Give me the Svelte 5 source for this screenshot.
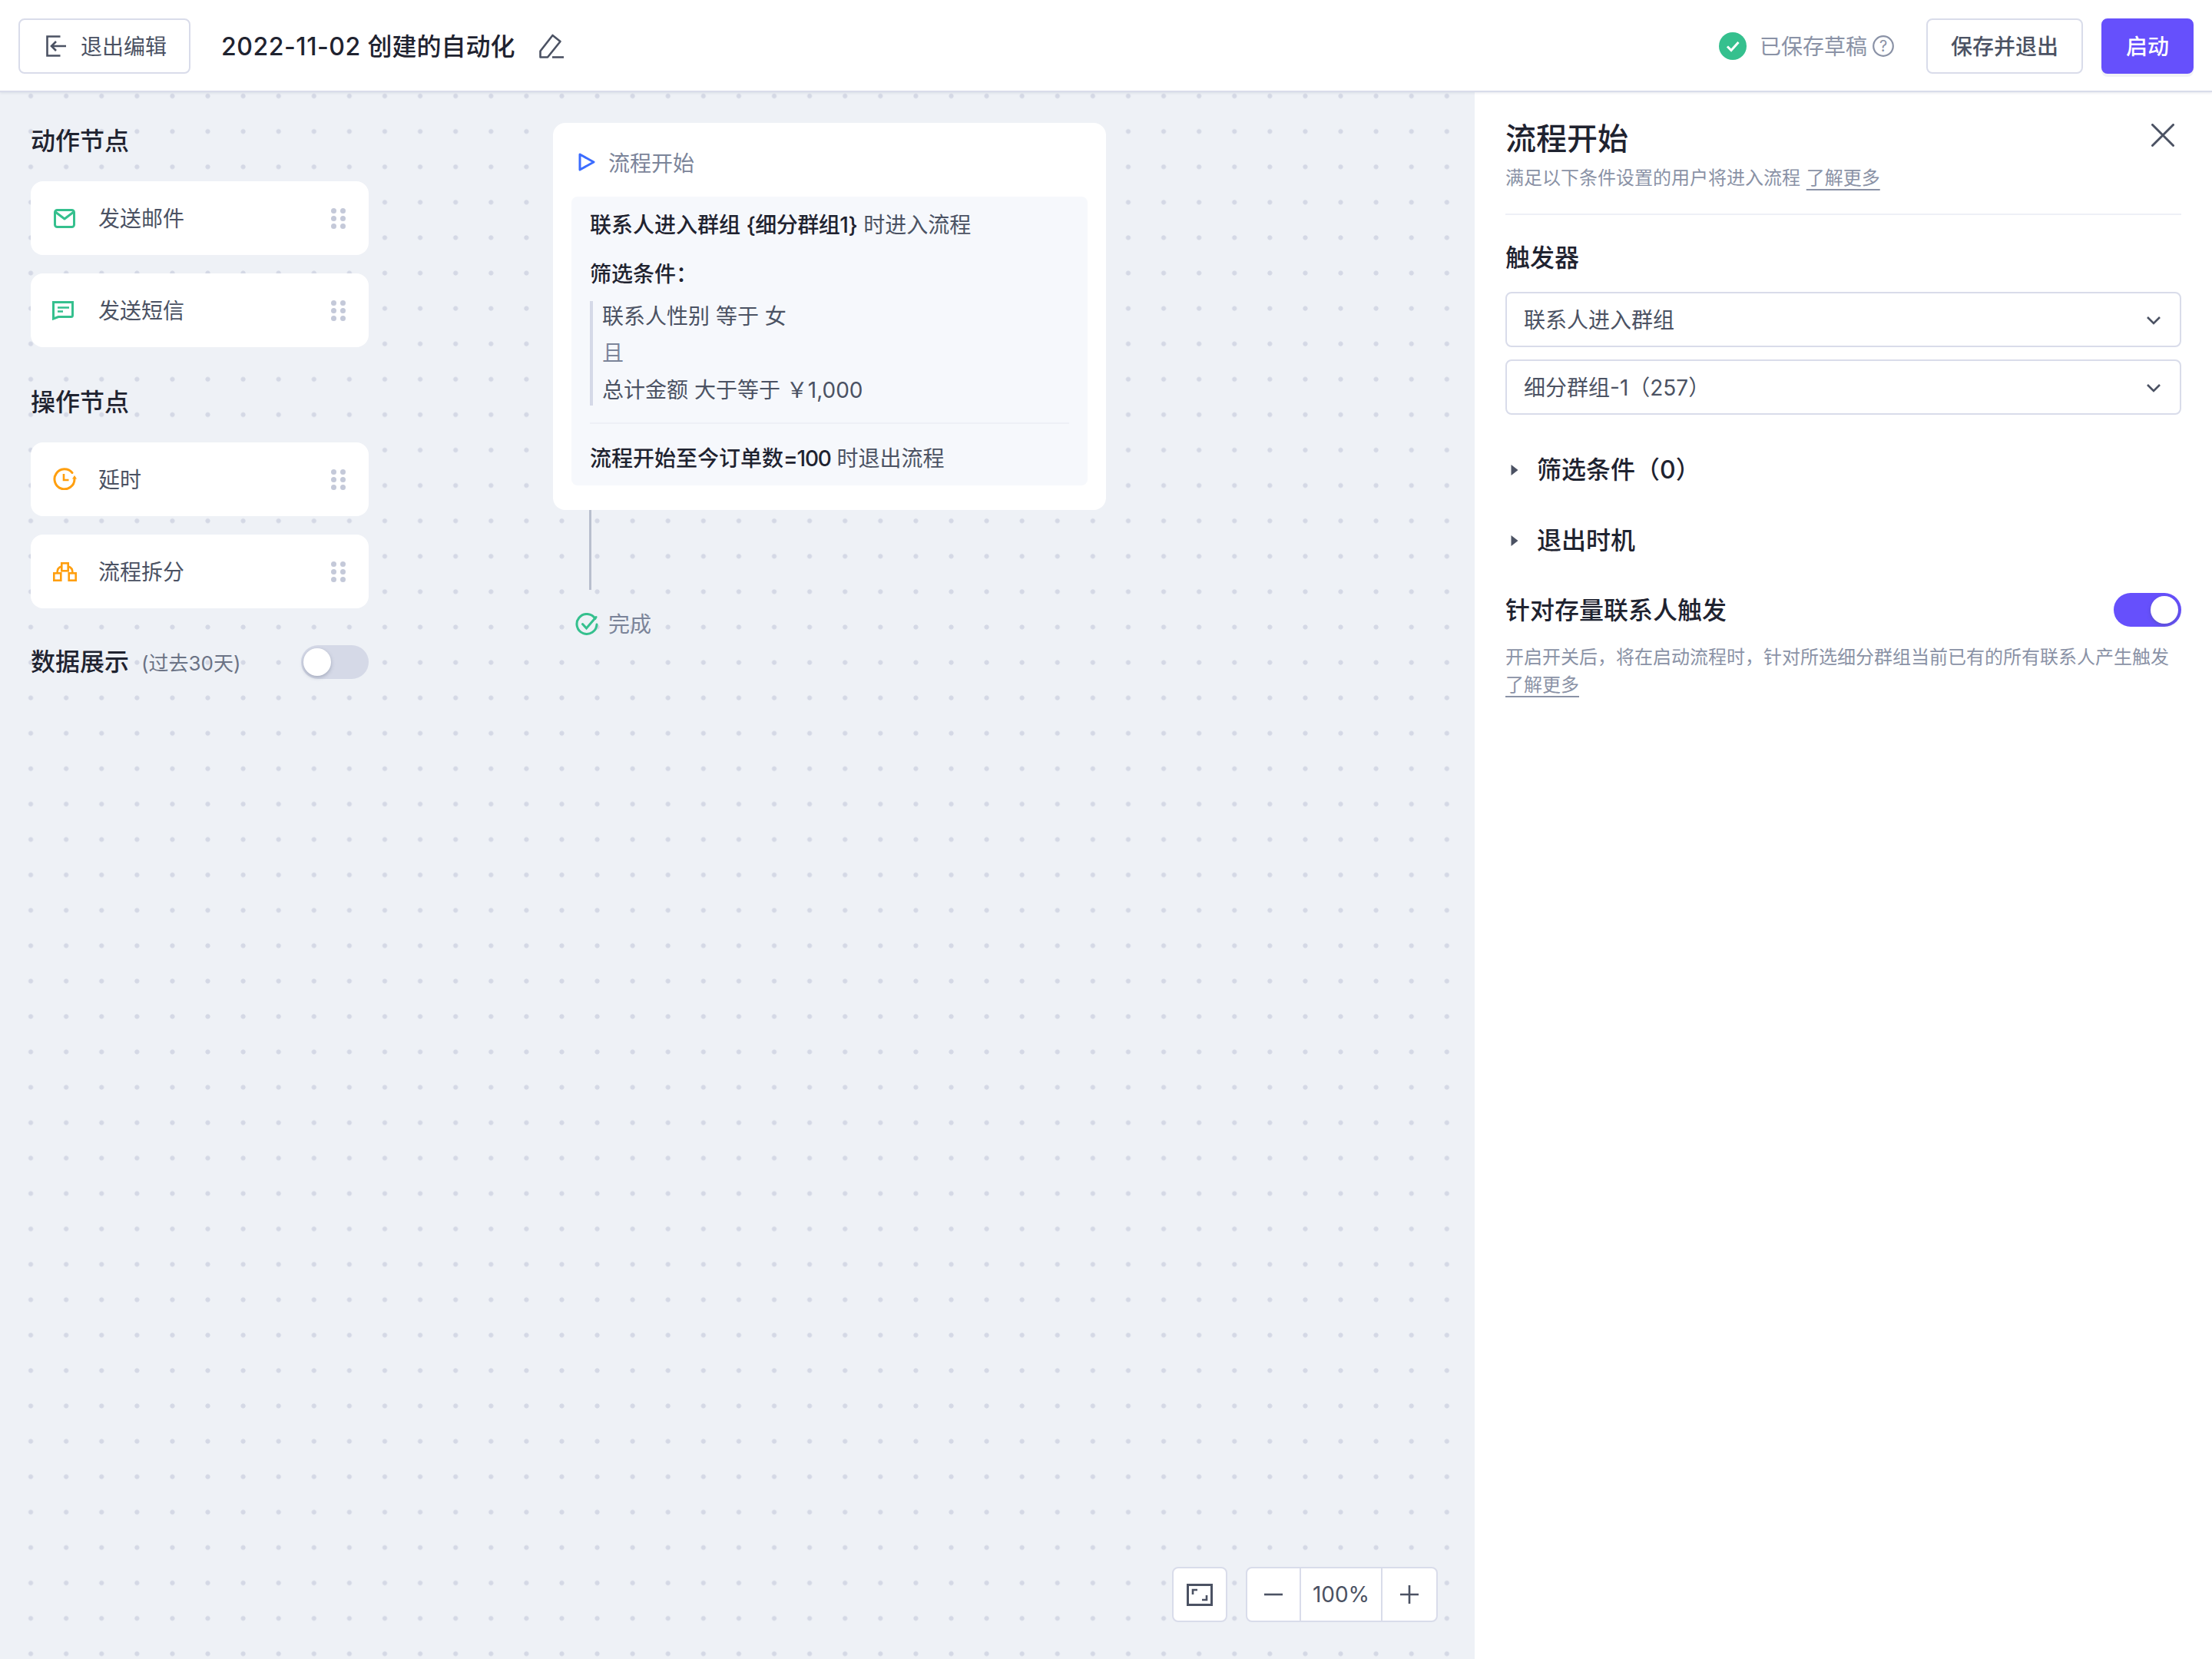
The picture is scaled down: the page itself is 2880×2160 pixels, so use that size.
<script>
  const actions = [
    { label: '发送邮件', icon: 'mail' },
    { label: '发送短信', icon: 'sms' }
  ];
  const operations = [
    { label: '延时', icon: 'delay' },
    { label: '流程拆分', icon: 'split' }
  ];
  const segmentName = '{细分群组1}';
  const conditions = ['联系人性别 等于 女', '且', '总计金额 大于等于 ￥1,000'];
</script>

{#snippet nodeIcon(name)}
  {#if name === 'mail'}
    <svg class="nico mail" viewBox="0 0 28 25" fill="none" stroke="#35c08e" stroke-width="3" stroke-linejoin="round">
      <rect x="1.5" y="1.5" width="25" height="22" rx="3" />
      <path d="M1.5 3.5 14 13 26.5 3.5" />
    </svg>
  {:else if name === 'sms'}
    <svg class="nico sms" viewBox="0 0 28 25" fill="none" stroke="#35c08e" stroke-width="3" stroke-linejoin="miter">
      <path d="M1.5 1.5H26.5V18.5a2 2 0 0 1-2 2H8L1.5 23Z" />
      <path d="M7 8.5H22M7 13.5H14" stroke-width="2.4" />
    </svg>
  {:else if name === 'delay'}
    <svg class="nico delay" viewBox="0 0 31 29" fill="none" stroke="#ff9f0f" stroke-width="3" stroke-linecap="round">
      <path d="M25 6.5A13 13 0 1 0 28 15" />
      <path d="M14 8v8h6.5" stroke-width="2.6" stroke-linecap="butt" />
      <path d="M25 14.5 28 10l3 4.5Z" fill="#ff9f0f" stroke="none" />
    </svg>
  {:else}
    <svg class="nico split" viewBox="0 0 31 25" fill="none" stroke="#ff9f0f" stroke-width="2.6">
      <rect x="11.3" y="1.3" width="8.4" height="10" />
      <rect x="1.3" y="14.3" width="9" height="9.4" />
      <rect x="20.7" y="14.3" width="9" height="9.4" />
      <path d="M11 5.5C7 6.5 5.5 10 5.5 14M20 5.5C24 6.5 25.5 10 25.5 14" />
    </svg>
  {/if}
{/snippet}

{#snippet grip()}
  <span class="grip"><i></i><i></i><i></i><i></i><i></i><i></i></span>
{/snippet}

{#snippet chevron()}
  <svg class="chev" viewBox="0 0 20 12" fill="none" stroke="#4b5263" stroke-width="2.6">
    <path d="M2 2 10 10 18 2" />
  </svg>
{/snippet}

{#snippet caret()}
  <svg class="caret" viewBox="0 0 10 14"><path d="M0.5 0 9.5 7 0.5 14Z" fill="#4b5263" /></svg>
{/snippet}

<div class="app">
  <header class="topbar">
    <div class="left">
      <button class="btn exit">
        <svg class="exit-ico" viewBox="0 0 27 28" fill="none" stroke="#4b5263" stroke-width="2.6">
          <path d="M18.5 1.5H1.5V26.5H18.5" />
          <path d="M26 14H7.5M13 8l-6 6 6 6" />
        </svg>
        退出编辑
      </button>
      <h1 class="title"><span class="date">2022-11-02</span> 创建的自动化</h1>
      <svg class="edit" viewBox="0 0 32 32" fill="none" stroke="#4b5263" stroke-width="2.6" stroke-linejoin="round">
        <path d="M1.5 30.5V22.5L17.5 2 27.5 10 11 30.5Z" />
        <path d="M17 30.5H32" />
      </svg>
    </div>
    <div class="right">
      <span class="saved-dot">
        <svg viewBox="0 0 36 36" fill="none" stroke="#fff" stroke-width="3"><path d="M11 18.5 16 23.5 25.5 13" /></svg>
      </span>
      <span class="saved">已保存草稿</span>
      <svg class="help" viewBox="0 0 28 28">
        <circle cx="14" cy="14" r="12.8" fill="none" stroke="#8a92a6" stroke-width="2.2" />
        <text x="14" y="20.5" text-anchor="middle">?</text>
      </svg>
      <button class="btn save">保存并退出</button>
      <button class="btn start">启动</button>
    </div>
  </header>

  <div class="body">
    <main class="canvas">
      <section class="palette">
        <h2 class="pal-title">动作节点</h2>
        {#each actions as item}
          <div class="pal-card">
            {@render nodeIcon(item.icon)}
            <span class="pal-label">{item.label}</span>
            {@render grip()}
          </div>
        {/each}
        <h2 class="pal-title second">操作节点</h2>
        {#each operations as item}
          <div class="pal-card">
            {@render nodeIcon(item.icon)}
            <span class="pal-label">{item.label}</span>
            {@render grip()}
          </div>
        {/each}
        <div class="data-row">
          <h2 class="pal-title flat">数据展示</h2>
          <span class="range">(过去30天)</span>
          <span class="toggle off"><i></i></span>
        </div>
      </section>

      <div class="flow">
        <article class="node">
          <div class="node-head">
            <svg class="play" viewBox="0 0 22 24" fill="none" stroke="#3b6cff" stroke-width="3" stroke-linejoin="round">
              <path d="M2 2 20 12 2 22Z" />
            </svg>
            流程开始
          </div>
          <div class="node-body">
            <p class="line"><b>联系人进入群组 <span class="tight">{segmentName}</span></b> 时进入流程</p>
            <p class="line filter"><b>筛选条件：</b></p>
            <div class="conds">
              {#each conditions as c, i}
                <p class="cond" class:and={i === 1}>{c}</p>
              {/each}
            </div>
            <div class="rule"></div>
            <p class="line"><b>流程开始至今订单数<span class="tighter">=100</span></b> 时退出流程</p>
          </div>
        </article>
        <div class="connector"></div>
        <div class="done">
          <svg viewBox="0 0 30 30" fill="none" stroke="#35c08e" stroke-width="3" stroke-linecap="round">
            <path d="M26 7.5A13 13 0 1 0 28 15" />
            <path d="M9.5 14.5 14.5 20 27 5.5" />
          </svg>
          完成
        </div>
      </div>

      <div class="zoombar">
        <button class="zbtn fit">
          <svg viewBox="0 0 34 29" fill="none" stroke="#4b5263" stroke-width="3">
            <rect x="1.5" y="1.5" width="31" height="26" />
            <path d="M14 8H8V14M20 21H26V15" stroke-width="2.6" />
          </svg>
        </button>
        <div class="zgroup">
          <button class="zseg">
            <svg viewBox="0 0 24 24" stroke="#4b5263" stroke-width="2.6"><path d="M0 12H24" /></svg>
          </button>
          <span class="zval">100%</span>
          <button class="zseg">
            <svg viewBox="0 0 24 24" stroke="#4b5263" stroke-width="2.6"><path d="M0 12H24M12 0V24" /></svg>
          </button>
        </div>
      </div>
    </main>

    <aside class="panel">
      <div class="panel-head">
        <div class="ph-row">
          <h2 class="ph-title">流程开始</h2>
          <svg class="close" viewBox="0 0 30 30" stroke="#4b5263" stroke-width="3" stroke-linecap="round"><path d="M1.5 1.5 28.5 28.5M28.5 1.5 1.5 28.5" /></svg>
        </div>
        <p class="ph-sub">满足以下条件设置的用户将进入流程 <a href="#more">了解更多</a></p>
      </div>

      <h3 class="sec trigger">触发器</h3>
      <div class="select">联系人进入群组{@render chevron()}</div>
      <div class="select">细分群组-1（257）{@render chevron()}</div>

      <div class="coll">{@render caret()}<h3 class="sec">筛选条件（0）</h3></div>
      <div class="coll">{@render caret()}<h3 class="sec">退出时机</h3></div>

      <div class="stock">
        <h3 class="sec">针对存量联系人触发</h3>
        <span class="toggle on"><i></i></span>
      </div>
      <p class="desc">开启开关后，将在启动流程时，针对所选细分群组当前已有的所有联系人产生触发<br /><a href="#more">了解更多</a></p>
    </aside>
  </div>
</div>

<style>
  :global(body) { margin: 0; }
  :global(*) { box-sizing: border-box; }
  .app {
    width: 2880px;
    height: 2160px;
    display: flex;
    flex-direction: column;
    font-family: Inter, "Noto Sans CJK SC", sans-serif;
    font-size: 28px;
    color: #4b5263;
    overflow: hidden;
  }
  h1, h2, h3, p { margin: 0; font-weight: 500; }
  b { font-weight: 500; color: #1f2330; }
  button { font: inherit; }

  .topbar {
    position: relative;
    z-index: 2;
    flex: none;
    height: 120px;
    background: #fff;
    border-bottom: 2px solid #d9dcea;
    box-shadow: 0 1px 3px rgba(150, 158, 185, 0.25);
    display: flex;
    align-items: center;
    justify-content: space-between;
    padding: 2px 24px 0;
  }
  .left, .right { display: flex; align-items: center; }
  .btn {
    height: 72px;
    border-radius: 8px;
    border: 2px solid #d9dcea;
    background: #fff;
    color: #4b5263;
    font-size: 28px;
    line-height: 1;
    display: flex;
    align-items: center;
    justify-content: center;
    padding: 2px 0 0;
  }
  .exit { width: 224px; gap: 18px; font-weight: 400; justify-content: flex-start; padding-left: 34px; }
  .exit-ico { width: 27px; height: 28px; margin-top: -2px; }
  .title { margin-left: 40px; padding-top: 2px; font-size: 32px; color: #1f2330; line-height: 44px; }
  .date { letter-spacing: 0.55px; }
  .edit { margin-left: 32px; width: 32px; height: 32px; }
  .saved-dot { width: 36px; height: 36px; border-radius: 50%; background: #35c08e; display: block; }
  .saved-dot svg { display: block; width: 36px; height: 36px; }
  .saved { margin-left: 17px; padding-top: 2px; color: #8a92a6; line-height: 40px; }
  .help { margin-left: 7px; width: 28px; height: 28px; }
  .help text { font-size: 20px; fill: #8a92a6; font-family: Inter, sans-serif; }
  .save { margin-left: 42px; width: 204px; font-weight: 500; }
  .start {
    margin-left: 24px;
    width: 120px;
    background: #6650fc;
    border-color: #6650fc;
    color: #fff;
    font-weight: 500;
    box-shadow: 0 4px 0 #f1f2f6;
  }

  .body { flex: 1; display: flex; min-height: 0; }
  .canvas {
    position: relative;
    width: 1920px;
    flex: none;
    background-color: #eef1f6;
    background-image: radial-gradient(circle, #d4d8e5 2.7px, rgba(212, 216, 229, 0) 3.4px);
    background-size: 46.1px 46.1px;
    background-position: 17px -18px;
    padding: 46px 0 0 40px;
  }

  .palette { width: 440px; }
  .pal-title { font-size: 32px; line-height: 36px; color: #1f2330; margin-bottom: 34px; }
  .pal-title.second { margin-top: 54px; margin-bottom: 34px; }
  .pal-title.flat { margin: 0; }
  .pal-card {
    position: relative;
    height: 96px;
    margin-bottom: 24px;
    background: #fff;
    border-radius: 16px;
    display: flex;
    align-items: center;
    padding-left: 88px;
  }
  .pal-label { line-height: 40px; padding-top: 2px; }
  .nico { position: absolute; display: block; }
  .mail { left: 30px; top: 36px; width: 28px; height: 25px; }
  .sms { left: 28px; top: 36px; width: 28px; height: 25px; }
  .delay { left: 29px; top: 33px; width: 31px; height: 29px; }
  .split { left: 29px; top: 36px; width: 31px; height: 25px; }
  .grip {
    position: absolute;
    left: 391px;
    top: 35px;
    display: grid;
    grid-template-columns: 7px 7px;
    grid-auto-rows: 7px;
    column-gap: 5px;
    row-gap: 3px;
  }
  .grip i { display: block; border-radius: 50%; background: #c4c9d9; }

  .data-row { display: flex; align-items: center; height: 44px; margin-top: 48px; position: relative; }
  .range { margin-left: 16px; padding-bottom: 2px; font-size: 26px; color: #6b7385; }
  .toggle {
    display: block;
    width: 88px;
    height: 44px;
    border-radius: 22px;
    position: relative;
    flex: none;
  }
  .toggle i {
    position: absolute;
    top: 4px;
    width: 36px;
    height: 36px;
    border-radius: 50%;
    background: #fff;
    box-shadow: 0 2px 5px rgba(70, 80, 110, 0.35);
  }
  .toggle.off { background: #d5d9e7; margin-left: auto; }
  .toggle.off i { left: 3px; }
  .toggle.on { background: #6650fc; }
  .toggle.on i { right: 4px; }

  .flow { position: absolute; left: 720px; top: 40px; width: 720px; }
  .node { background: #fff; border-radius: 16px; padding: 24px 24px 32px; height: 504px; }
  .node-head {
    height: 56px;
    margin-left: 9px;
    padding-bottom: 2px;
    display: flex;
    align-items: center;
    gap: 17px;
    color: #7b8499;
  }
  .play { width: 22px; height: 24px; }
  .node-body { margin-top: 16px; height: 376px; background: #f6f8fc; border-radius: 8px; padding: 16px 24px; }
  .line { font-weight: 400; height: 40px; line-height: 42px; color: #4b5263; white-space: pre-wrap; }
  .tight { letter-spacing: -0.5px; }
  .tighter { letter-spacing: -1.2px; }
  .filter { margin-top: 24px; }
  .conds {
    margin-top: 16px;
    border-left: 4px solid #d5d9e7;
    padding-left: 12px;
    display: flex;
    flex-direction: column;
    gap: 8px;
  }
  .cond { font-weight: 400; height: 40px; line-height: 41px; color: #4b5263; white-space: pre-wrap; }
  .cond.and { color: #7b8499; }
  .rule { height: 2px; background: #eef0f6; margin: 22px 0 24px; }
  .connector { width: 3px; height: 104px; margin-left: 47px; background: #b9bfce; }
  .done {
    position: absolute;
    left: 29px;
    top: 638px;
    display: flex;
    align-items: center;
    gap: 13px;
    color: #7b8499;
    line-height: 30px;
  }
  .done svg { width: 30px; height: 30px; }

  .zoombar { position: absolute; left: 1526px; top: 1920px; display: flex; gap: 24px; }
  .zbtn, .zgroup { height: 72px; background: #fff; border: 2px solid #d9dcea; border-radius: 8px; }
  .zbtn { width: 72px; display: flex; align-items: center; justify-content: center; padding: 0; }
  .zbtn svg { width: 34px; height: 29px; }
  .zgroup { display: flex; align-items: center; width: 250px; }
  .zseg { flex: none; width: 70px; height: 100%; background: none; border: 0; padding: 0; display: flex; align-items: center; justify-content: center; }
  .zseg:first-child { width: 68px; }
  .zseg svg { width: 24px; height: 24px; }
  .zval {
    flex: 1;
    height: 100%;
    display: flex;
    align-items: center;
    justify-content: center;
    border-left: 2px solid #d9dcea;
    border-right: 2px solid #d9dcea;
  }

  .panel { flex: 1; background: #fff; padding: 36px 40px 0; }
  .panel-head { height: 124px; border-bottom: 2px solid #eef0f6; }
  .ph-row { display: flex; justify-content: space-between; align-items: center; height: 48px; padding-top: 2px; }
  .ph-title { font-size: 40px; line-height: 48px; color: #1f2330; }
  .close { width: 30px; height: 30px; margin-right: 9px; margin-top: -10px; }
  .ph-sub { margin-top: 10px; font-size: 24px; font-weight: 400; line-height: 36px; color: #8a92a6; }
  a { margin-left: 1px; color: #8a92a6; text-decoration: underline; text-decoration-thickness: 2px; text-underline-offset: 6px; }
  .desc a { margin-left: 0; }
  .sec { font-size: 32px; line-height: 40px; color: #1f2330; }
  .trigger { margin-top: 36px; margin-bottom: 24px; }
  .select {
    height: 72px;
    border: 2px solid #d9dcea;
    border-radius: 8px;
    margin-bottom: 16px;
    padding: 2px 24px 0 22px;
    display: flex;
    align-items: center;
    justify-content: space-between;
    line-height: 40px;
  }
  .chev { width: 20px; height: 12px; }
  .coll { display: flex; align-items: center; height: 40px; margin-top: 52px; }
  .caret { width: 10px; height: 14px; margin: 0 24px 0 7px; }
  .stock { display: flex; justify-content: space-between; align-items: center; height: 44px; margin-top: 48px; }
  .stock .sec { padding-top: 2px; }
  .desc { margin-top: 22px; font-size: 24px; font-weight: 400; line-height: 36px; color: #8a92a6; }
</style>
